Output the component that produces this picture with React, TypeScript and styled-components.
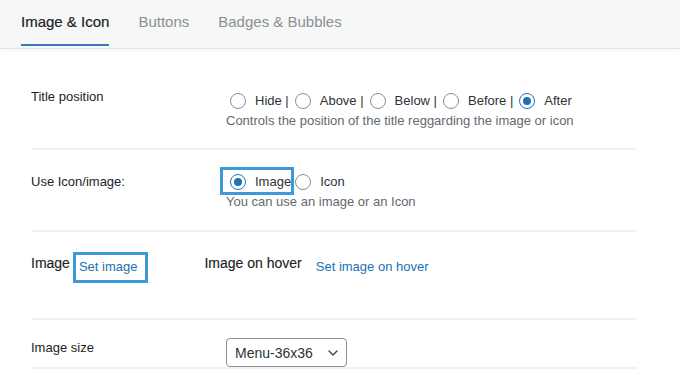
import React from "react";
import styled, { createGlobalStyle } from "styled-components";

const Global = createGlobalStyle`
  html, body { margin: 0; padding: 0; background: #ffffff; }
  body {
    font-family: "Liberation Sans", Arial, Helvetica, sans-serif;
    color: #1d2327;
    -webkit-font-smoothing: antialiased;
  }
`;

const Page = styled.div`
  width: 680px;
  height: 386px;
  overflow: hidden;
  background: #ffffff;
`;

const TabBar = styled.nav`
  height: 49px;
  box-sizing: border-box;
  background: #f6f7f7;
  border-bottom: 1px solid #e3e4e6;
  box-shadow: 0 1px 3px rgba(0, 0, 0, 0.05);
  display: flex;
  align-items: flex-start;
  gap: 29px;
  padding-left: 21px;
`;

const Tab = styled.div<{ $active?: boolean }>`
  height: 46px;
  box-sizing: border-box;
  display: flex;
  align-items: center;
  font-size: 15px;
  line-height: 20px;
  color: ${(p) => (p.$active ? "#1d2327" : "#8c8f94")};
  -webkit-text-stroke: ${(p) => (p.$active ? "0.2px #1d2327" : "0")};
  border-bottom: 2px solid ${(p) => (p.$active ? "#3a78c2" : "transparent")};
`;

const Form = styled.div`
  width: 606px;
  margin-left: 31px;
  margin-top: 1px;
`;

const Row = styled.div<{ $pt: number; $pb: number }>`
  display: grid;
  grid-template-columns: 195px 1fr;
  align-items: start;
  padding-top: ${(p) => p.$pt}px;
  padding-bottom: ${(p) => p.$pb}px;
  border-bottom: 2px solid #f2f2f3;
`;

const FlexRow = styled.div<{ $pt: number; $pb: number }>`
  display: flex;
  align-items: flex-start;
  padding-top: ${(p) => p.$pt}px;
  padding-bottom: ${(p) => p.$pb}px;
  border-bottom: 2px solid #f2f2f3;
`;

const Label = styled.div<{ $strong?: boolean }>`
  font-size: ${(p) => (p.$strong ? 14 : 13)}px;
  line-height: 20px;
  color: #1d2327;
  -webkit-text-stroke: ${(p) => (p.$strong ? "0.15px #1d2327" : "0")};
`;

const Field = styled.div<{ $mt?: number }>`
  display: flex;
  flex-direction: column;
  margin-top: ${(p) => p.$mt ?? 0}px;
`;

const RadioGroup = styled.div`
  display: flex;
  align-items: center;
  height: 20px;
  padding-left: 4px;
`;

const Option = styled.label<{ $space: number }>`
  position: relative;
  display: flex;
  align-items: center;
  font-size: 13px;
  line-height: 20px;
  color: #2c3338;
  margin-right: ${(p) => p.$space}px;
`;

const Radio = styled.span<{ $checked?: boolean }>`
  width: 16px;
  height: 16px;
  box-sizing: border-box;
  border-radius: 50%;
  border: 1px solid ${(p) => (p.$checked ? "#2271b1" : "#8c8f94")};
  background: #fff;
  margin-right: 9px;
  display: flex;
  align-items: center;
  justify-content: center;
  &::after {
    content: "";
    display: ${(p) => (p.$checked ? "block" : "none")};
    width: 8px;
    height: 8px;
    border-radius: 50%;
    background: #2271b1;
  }
`;

const Highlight = styled.span<{ $t: number; $r: number; $b: number; $l: number }>`
  position: absolute;
  top: ${(p) => p.$t}px;
  right: ${(p) => p.$r}px;
  bottom: ${(p) => p.$b}px;
  left: ${(p) => p.$l}px;
  border: 3px solid #3d9ad9;
  pointer-events: none;
`;

const Description = styled.div`
  font-size: 13px;
  line-height: 20px;
  color: #646970;
`;

const Link = styled.a<{ $ml: number; $mt?: number }>`
  position: relative;
  font-size: 13px;
  line-height: 20px;
  color: #2271b1;
  text-decoration: none;
  margin-left: ${(p) => p.$ml}px;
  margin-top: ${(p) => p.$mt ?? 0}px;
`;

const SubLabel = styled(Label)`
  margin-left: 67px;
`;

const SelectBox = styled.div`
  width: 121px;
  height: 29px;
  box-sizing: border-box;
  border: 1px solid #8c8f94;
  border-radius: 4px;
  background: #fff;
  display: flex;
  align-items: center;
  justify-content: space-between;
  padding: 0 8px 0 8px;
  font-size: 14px;
  color: #2c3338;
`;

const Chevron = () => (
  <svg width="10" height="6" viewBox="0 0 10 6" fill="none">
    <path d="M1 1l4 4 4-4" stroke="#3c434a" strokeWidth="1.4" strokeLinecap="round" strokeLinejoin="round" />
  </svg>
);

const positions = ["Hide |", "Above |", "Below |", "Before |", "After"];

export default function App() {
  return (
    <Page>
      <Global />
      <TabBar>
        <Tab $active>Image &amp; Icon</Tab>
        <Tab>Buttons</Tab>
        <Tab>Badges &amp; Bubbles</Tab>
      </TabBar>
      <Form>
        <Row $pt={37} $pb={17}>
          <Label>Title position</Label>
          <Field $mt={4}>
            <RadioGroup>
              {positions.map((p, i) => (
                <Option key={p} $space={6}>
                  <Radio $checked={i === positions.length - 1} />
                  {p}
                </Option>
              ))}
            </RadioGroup>
            <Description>Controls the position of the title reggarding the image or icon</Description>
          </Field>
        </Row>
        <Row $pt={22} $pb={18}>
          <Label>Use Icon/image:</Label>
          <Field>
            <RadioGroup>
              <Option $space={4}>
                <Radio $checked />
                Image
                <Highlight $t={-5} $r={-3} $b={-3} $l={-10} />
              </Option>
              <Option $space={0}>
                <Radio />
                Icon
              </Option>
            </RadioGroup>
            <Description>You can use an image or an Icon</Description>
          </Field>
        </Row>
        <FlexRow $pt={21} $pb={41}>
          <Label $strong>Image</Label>
          <Link $ml={9} $mt={4}>
            Set image
            <Highlight $t={-5} $r={-11} $b={-6} $l={-6} />
          </Link>
          <SubLabel $strong>Image on hover</SubLabel>
          <Link $ml={14} $mt={4}>Set image on hover</Link>
        </FlexRow>
        <Row $pt={18} $pb={0}>
          <Label>Image size</Label>
          <SelectBox>
            <span>Menu-36x36</span>
            <Chevron />
          </SelectBox>
        </Row>
      </Form>
    </Page>
  );
}
